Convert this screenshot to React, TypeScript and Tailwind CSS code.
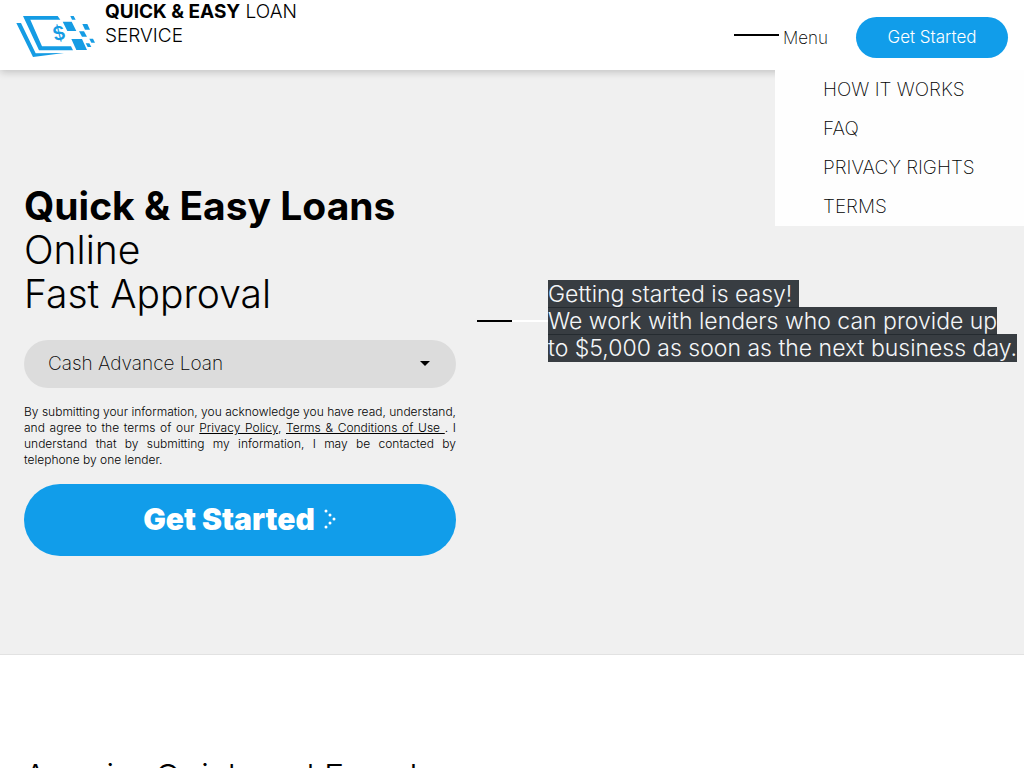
import React, { useState } from "react";

const menuItems = ["How it works", "FAQ", "Privacy rights", "Terms"];

const loanTypes = ["Cash Advance Loan", "Personal Loan", "Installment Loan"];

function Logo() {
  return (
    <svg viewBox="48 45 240 129" className="w-20 h-[43px] shrink-0" fill="#159ce4" aria-hidden="true">
      <path d="M49 69h14l44 91 85-1-93 12z" />
      <path d="M69 48h104l8 11H91l35 80h87l6 12h-102z" />
      <path d="M188 65h27l14 28h-27z" />
      <path d="M211 48h10l6 11h-11z" />
      <path d="M247 72h15l8 17h-15z" />
      <path d="M237 94h15l9 16h-15z" />
      <path d="M214 117h32l15 33h-32z" />
      <path d="M268 116h11l6 12h-11z" />
      <path d="M257 130h11l6 11h-11z" />
      <text x="158" y="120" fontSize="57" fontWeight="600" fontFamily="Inter, sans-serif" transform="rotate(-14 176 100)">$</text>
    </svg>
  );
}

function DottedChevron() {
  return (
    <svg viewBox="0 0 14 20" className="w-[14px] h-5" fill="white" aria-hidden="true">
      <circle cx="3" cy="2" r="1.5" />
      <circle cx="7" cy="6" r="1.5" />
      <circle cx="11" cy="10" r="1.5" />
      <circle cx="7" cy="14" r="1.5" />
      <circle cx="3" cy="18" r="1.5" />
    </svg>
  );
}

function Header() {
  const [open, setOpen] = useState(true);

  return (
    <header className="relative z-10 flex h-[70px] items-start justify-between bg-white px-4 shadow-[0_2px_8px_rgba(0,0,0,0.2)]">
      <a href="#" className="flex items-start gap-[9px] text-black">
        <span className="pt-[15px]"><Logo /></span>
        <span className="text-[19px] leading-6">
          <b className="font-bold">QUICK &amp; EASY</b> <span className="font-light">LOAN</span>
          <br />
          <span className="font-light">SERVICE</span>
        </span>
      </a>

      <div className="flex h-full items-center gap-7 pt-1">
        <button type="button" onClick={() => setOpen(!open)} aria-expanded={open} className="flex items-center gap-1 pt-0.5 text-[17px] font-extralight leading-6">
          <span className="mb-1.5 h-[2px] w-[45px] bg-black" />
          Menu
        </button>
        <button type="button" className="h-[41px] w-[152px] rounded-full bg-[#119dea] pt-0.5 text-[17px] font-light text-white">
          Get Started
        </button>
      </div>

      {open && (
        <nav className="absolute right-0 top-full w-[249px] bg-[#fefefe] pl-12">
          <ul>
            {menuItems.map((item) => (
              <li key={item}>
                <a href="#" className="block text-[19px] font-extralight uppercase leading-[39px] text-black">{item}</a>
              </li>
            ))}
          </ul>
        </nav>
      )}
    </header>
  );
}

function LoanForm() {
  return (
    <form className="w-full max-w-[432px]" onSubmit={(e) => e.preventDefault()}>
      <h1 className="text-[39px] font-light leading-[44px] text-black">
        <b className="font-bold">Quick &amp; Easy Loans</b>
        <br />
        Online
        <br />
        Fast Approval
      </h1>

      <div className="relative mt-6">
        <select aria-label="Loan type" className="h-12 w-full appearance-none rounded-full bg-[#dcdcdc] px-6 text-[19px] font-extralight text-black">
          {loanTypes.map((type) => (
            <option key={type}>{type}</option>
          ))}
        </select>
        <svg viewBox="0 0 10 5" className="pointer-events-none absolute right-[26px] top-[21px] h-[5px] w-[10px]" aria-hidden="true">
          <path d="M0 0h10L5 5z" />
        </svg>
      </div>

      <p className="mt-4 text-justify text-[12px] font-light leading-4 text-black">
        By submitting your information, you acknowledge you have read, understand, and agree to the terms of our{" "}
        <a href="#" className="underline">Privacy Policy</a>,{" "}
        <a href="#" className="underline">Terms &amp; Conditions of Use </a>. I understand that by submitting my
        information, I may be contacted by telephone&nbsp;by&nbsp;one&nbsp;lender.
      </p>

      <button type="submit" className="mt-4 flex h-[72px] w-full items-center justify-center gap-2 rounded-full bg-[#119dea] pb-0.5 text-[30px] font-black text-white">
        Get Started
        <DottedChevron />
      </button>
    </form>
  );
}

export default function App() {
  return (
    <div className="min-h-screen overflow-x-hidden bg-white font-['Inter',sans-serif]">
      <Header />

      <main>
        <section className="flex gap-[21px] border-b border-[#e2e2e2] bg-[#f0f0f0] pb-[98px] pl-6 pt-[114px]">
          <LoanForm />
          <div className="flex shrink-0 items-start pt-[97px]">
            <div className="mt-[39px] flex h-[2px] w-[71px]">
              <span className="w-[35px] bg-black" />
              <span className="flex-1 bg-white" />
            </div>
            <p className="text-[23px] font-light leading-[27px] text-[#f4f6f8]">
              <span className="bg-[#23292f]/90">
                Getting started is easy!&nbsp;
                <br />
                We work with lenders who can provide up
                <br />
                to $5,000 as soon as the next business day.
              </span>
            </p>
          </div>
        </section>

        <section className="px-6 pt-[100px]">
          <h2 className="text-[34px] font-light leading-[44px] text-black">
            Acquire Quick and Easy Loans
          </h2>
        </section>
      </main>
    </div>
  );
}
